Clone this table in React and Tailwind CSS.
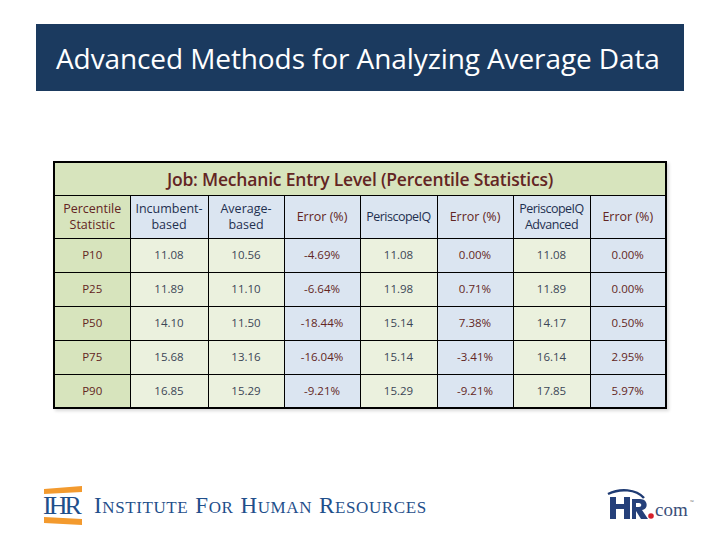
const rows = [
  ['P10', '11.08', '10.56', '-4.69%', '11.08', '0.00%', '11.08', '0.00%'],
  ['P25', '11.89', '11.10', '-6.64%', '11.98', '0.71%', '11.89', '0.00%'],
  ['P50', '14.10', '11.50', '-18.44%', '15.14', '7.38%', '14.17', '0.50%'],
  ['P75', '15.68', '13.16', '-16.04%', '15.14', '-3.41%', '16.14', '2.95%'],
  ['P90', '16.85', '15.29', '-9.21%', '15.29', '-9.21%', '17.85', '5.97%'],
]

const widths = ['w-[76px]', 'w-[78px]', 'w-[76px]', 'w-[76px]', 'w-[77px]', 'w-[76px]', 'w-[77px]', 'w-[76px]']

function IhrLogo() {
  return (
    <div className="flex items-center gap-[10px]">
      <div className="flex flex-col items-start">
        <svg width="42" height="8" viewBox="0 0 42 8">
          <polygon points="2,3 40,0 40,6 2,8" fill="#f39a2e" />
        </svg>
        <span
          className="text-[26px] leading-[25px] text-[#1f4f8b] tracking-[-3px] -my-[1px] ml-[1px]"
          style={{ fontFamily: '"Liberation Serif", serif' }}
        >
          IHR
        </span>
        <svg width="42" height="8" viewBox="0 0 42 8">
          <polygon points="2,0 40,2 40,8 2,6" fill="#f39a2e" />
        </svg>
      </div>
      <div
        className="text-[#1f4f8b] flex items-baseline gap-[7px] mt-[2px]"
        style={{ fontFamily: '"Liberation Serif", serif' }}
      >
        <span className="text-[23px] tracking-[0.6px]">
          I<span className="text-[17px]">NSTITUTE</span>
        </span>
        <span className="text-[23px] tracking-[0.6px]">
          F<span className="text-[17px]">OR</span>
        </span>
        <span className="text-[23px] tracking-[0.6px]">
          H<span className="text-[17px]">UMAN</span>
        </span>
        <span className="text-[23px] tracking-[0.6px]">
          R<span className="text-[17px]">ESOURCES</span>
        </span>
      </div>
    </div>
  )
}

function HrComLogo() {
  return (
    <div className="relative w-[90px] h-[34px]">
      <svg className="absolute left-0 top-0" width="84" height="34" viewBox="0 0 84 34">
        <path d="M2 6 C 14 0, 30 1, 38 10" stroke="#1f3b73" strokeWidth="2.5" fill="none" />
        <path d="M4 9 L10 9 L10 16 L18 16 L18 9 L24 9 L24 31 L18 31 L18 21 L10 21 L10 31 L4 31 Z" fill="#25407a" />
        <path d="M26 11 L34 11 C 42 11, 43 21, 36 22 L42 31 L35 31 L30 23 L30 31 L26 31 Z M30 15 L30 19 L33 19 C 36 19, 36 15, 33 15 Z" fill="#25407a" />
        <circle cx="45" cy="28" r="2.8" fill="#d6202a" />
      </svg>
      <span
        className="absolute left-[49px] top-[12px] text-[19px] leading-[20px] text-[#3a4f7a]"
        style={{ fontFamily: '"Liberation Serif", serif' }}
      >
        com
      </span>
      <span className="absolute left-[84px] top-[12px] text-[5px] leading-[5px] text-[#777]">™</span>
    </div>
  )
}

export default function App() {
  const font = { fontFamily: '"Open Sans", "Noto Sans", sans-serif' }
  const cell = 'border border-black text-center align-middle p-0'
  return (
    <div className="w-[720px] h-[540px] bg-white relative overflow-hidden" style={font}>
      <div className="pt-[24px] px-[36px]">
        <div className="h-[67px] bg-[#1b3a5f] flex items-center pl-[20px]">
          <h1 className="text-white text-[28px] tracking-[-0.1px] leading-none">
            Advanced Methods for Analyzing Average Data
          </h1>
        </div>
      </div>

      <div className="pl-[53px] pt-[70px]">
        <table className="border-collapse border-2 border-black shadow-[2px_2px_3px_rgba(0,0,0,0.15)] table-fixed text-[12.5px]">
          <thead>
            <tr className="h-[33px]">
              <th colSpan={8} className="border border-black bg-[#d7e4bd] text-[#632523] font-semibold text-[17.5px] text-center tracking-[-0.2px]">
                Job: Mechanic Entry Level (Percentile Statistics)
              </th>
            </tr>
            <tr className="h-[43px] leading-[16px]">
              <th className={`${cell} ${widths[0]} bg-[#d7e4bd] text-[#632523] font-medium`}>Percentile<br />Statistic</th>
              <th className={`${cell} ${widths[1]} bg-[#dbe5f1] text-[#1f3050] font-normal`}>Incumbent-<br />based</th>
              <th className={`${cell} ${widths[2]} bg-[#dbe5f1] text-[#1f3050] font-normal`}>Average-<br />based</th>
              <th className={`${cell} ${widths[3]} bg-[#dbe5f1] text-[#632523] font-normal`}>Error (%)</th>
              <th className={`${cell} ${widths[4]} bg-[#dbe5f1] text-[#1f3050] font-normal tracking-[-0.5px]`}>PeriscopeIQ</th>
              <th className={`${cell} ${widths[5]} bg-[#dbe5f1] text-[#632523] font-normal`}>Error (%)</th>
              <th className={`${cell} ${widths[6]} bg-[#dbe5f1] text-[#1f3050] font-normal tracking-[-0.5px]`}>PeriscopeIQ<br />Advanced</th>
              <th className={`${cell} ${widths[7]} bg-[#dbe5f1] text-[#632523] font-normal`}>Error (%)</th>
            </tr>
          </thead>
          <tbody>
            {rows.map((r) => (
              <tr key={r[0]} className="h-[34px] text-[11.5px]">
                {r.map((v, i) => {
                  let bg = 'bg-[#ebf1de] text-[#3b4656]'
                  if (i === 0) bg = 'bg-[#d7e4bd] text-[#632523] font-medium'
                  else if (i === 3 || i === 5 || i === 7) bg = 'bg-[#dbe5f1] text-[#632523]'
                  return (
                    <td key={i} className={`${cell} ${bg}`}>
                      {v}
                    </td>
                  )
                })}
              </tr>
            ))}
          </tbody>
        </table>
      </div>

      <div className="absolute left-[42px] top-[486px]">
        <IhrLogo />
      </div>
      <div className="absolute left-[606px] top-[488px]">
        <HrComLogo />
      </div>
    </div>
  )
}
